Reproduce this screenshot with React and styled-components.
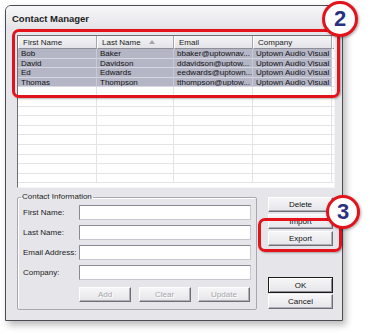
import React from "react";
import styled, { createGlobalStyle } from "styled-components";

const GlobalStyle = createGlobalStyle`
  body {
    margin: 0;
    background: #fff;
    font-family: "Liberation Sans", Arial, sans-serif;
  }
`;

const columns = ["First Name", "Last Name", "Email", "Company"];

const contacts = [
  ["Bob", "Baker", "bbaker@uptownav...", "Uptown Audio Visual"],
  ["David", "Davidson", "ddavidson@uptow...", "Uptown Audio Visual"],
  ["Ed", "Edwards", "eedwards@uptown...", "Uptown Audio Visual"],
  ["Thomas", "Thompson", "tthompson@uptow...", "Uptown Audio Visual"]
];

const EMPTY_ROWS = 10;

const fields = ["First Name:", "Last Name:", "Email Address:", "Company:"];

const Page = styled.div`
  position: relative;
  width: 370px;
  height: 335px;
  padding: 5px 0 0 5px;
  box-sizing: border-box;
  overflow: hidden;
`;

const Window = styled.div`
  width: 338px;
  height: 316px;
  box-sizing: border-box;
  border: 1px solid #4c4c54;
  border-radius: 6px 6px 0 0;
  background: #e6e6ea;
  box-shadow: 3px 4px 7px rgba(0, 0, 0, 0.28);
  display: flex;
  flex-direction: column;
`;

const TitleBar = styled.div`
  height: 24px;
  flex: none;
  display: flex;
  align-items: center;
  padding-left: 6px;
  border-radius: 5px 5px 0 0;
  background: linear-gradient(#f7f7f9, #e3e3e7);
  font-size: 9.5px;
  font-weight: bold;
  color: #222;
`;

const Body = styled.div`
  flex: 1;
  display: flex;
  flex-direction: column;
  padding: 5px 7px 10px 11px;
`;

const ListView = styled.div`
  height: 153px;
  box-sizing: border-box;
  border: 1px solid;
  border-color: #6e6e78 #f4f4f6 #f4f4f6 #6e6e78;
  background: #fff;
  overflow: hidden;
  font-size: 8px;
  color: #111;
`;

const Grid = styled.div`
  display: grid;
  grid-template-columns: 79px 77px 79px 79px 1fr;
`;

const HeaderCell = styled.div`
  height: 13px;
  box-sizing: border-box;
  display: flex;
  align-items: center;
  gap: 8px;
  padding-left: 4px;
  background: linear-gradient(#f4f4f6, #e4e4e8);
  border-left: 1px solid #fff;
  border-right: 1px solid #a6a6ae;
  border-bottom: 1px solid #8e8e96;
  color: #222;
`;

const Cell = styled.div`
  height: 9.6px;
  line-height: 9.6px;
  box-sizing: border-box;
  padding-left: 3px;
  white-space: nowrap;
  overflow: hidden;
  background: ${p => (p.$selected ? "#b4b6c6" : "#fff")};
  border-right: 1px solid ${p => (p.$selected ? "#c8c9d4" : "#e4e4e6")};
  border-bottom: 1px solid ${p => (p.$selected ? "#d6d7e0" : "#e4e4e6")};
`;

const SortArrow = () => (
  <svg width="6" height="4" viewBox="0 0 6 4">
    <path d="M3 0 L6 4 L0 4 Z" fill="#a4a4ac" />
  </svg>
);

const Bottom = styled.div`
  flex: 1;
  display: flex;
  gap: 11px;
  margin-top: 4px;
`;

const GroupBox = styled.fieldset`
  width: 240px;
  box-sizing: border-box;
  margin: 0;
  padding: 3px 5px 6px 5px;
  border: 1px solid #a8a8b0;
  border-radius: 2px;
  box-shadow: inset 1px 1px 0 #fff;
`;

const Legend = styled.legend`
  margin-left: -2px;
  padding: 0 1px;
  font-size: 8px;
  line-height: 10px;
  color: #222;
`;

const Fields = styled.div`
  display: grid;
  grid-template-columns: 56px 172px;
  row-gap: 5px;
  align-items: center;
`;

const Label = styled.label`
  font-size: 8px;
  color: #222;
`;

const Input = styled.div`
  height: 15px;
  box-sizing: border-box;
  background: #fff;
  border: 1px solid;
  border-color: #8a8a94 #c8c8d0 #c8c8d0 #8a8a94;
`;

const ActionRow = styled.div`
  display: flex;
  justify-content: space-between;
  margin: 7px 1px 0 56px;
`;

const Button = styled.button`
  width: ${p => p.$width || 65}px;
  height: ${p => (p.$default ? 16 : 15)}px;
  box-sizing: border-box;
  padding: 0;
  font-family: "Liberation Sans", Arial, sans-serif;
  font-size: 8px;
  color: ${p => (p.disabled ? "#a6a6ac" : "#111")};
  text-shadow: ${p => (p.disabled ? "1px 1px 0 #fff" : "none")};
  background: linear-gradient(#f6f6f8, #e6e6ea);
  border: 1px solid;
  border-color: ${p =>
    p.$default ? "#1c1c1c" : "#ffffff #6e6e76 #6e6e76 #ffffff"};
  box-shadow: ${p =>
    p.$default
      ? "inset 1px 1px 0 #fff, inset -1px -1px 0 #8a8a92"
      : "inset -1px -1px 0 #b0b0b8"};
`;

const ButtonColumn = styled.div`
  display: flex;
  flex-direction: column;
  gap: 2px;
  padding: 5px 0 1px;
`;

const DialogButtons = styled.div`
  margin-top: auto;
  display: flex;
  flex-direction: column;
  gap: 1px;
`;

const Callout = styled.div`
  position: absolute;
  left: ${p => p.$x}px;
  top: ${p => p.$y}px;
  width: ${p => p.$w}px;
  height: ${p => p.$h}px;
  box-sizing: border-box;
  border: 3px solid #e3121b;
  border-radius: 7px;
  box-shadow: 1px 1px 2px rgba(0, 0, 0, 0.3);
`;

const Badge = styled.div`
  position: absolute;
  left: ${p => p.$x}px;
  top: ${p => p.$y}px;
  width: ${p => p.$size}px;
  height: ${p => p.$size}px;
  box-sizing: border-box;
  border: 3px solid #e3121b;
  border-radius: 50%;
  background: #fff;
  box-shadow: 1px 1px 3px rgba(0, 0, 0, 0.35);
  display: flex;
  align-items: center;
  justify-content: center;
  font-size: 22px;
  font-weight: bold;
  color: #2b2f7f;
`;

export default function App() {
  return (
    <Page>
      <GlobalStyle />
      <Window>
        <TitleBar>Contact Manager</TitleBar>
        <Body>
          <ListView>
            <Grid>
              {columns.map(c => (
                <HeaderCell key={c}>
                  {c}
                  {c === "Last Name" && <SortArrow />}
                </HeaderCell>
              ))}
              <HeaderCell />
              {contacts.map((row, r) => (
                <React.Fragment key={r}>
                  {row.map((v, c) => (
                    <Cell key={c} $selected>
                      {v}
                    </Cell>
                  ))}
                  <Cell />
                </React.Fragment>
              ))}
              {Array.from({ length: EMPTY_ROWS }).map((_, r) => (
                <React.Fragment key={"e" + r}>
                  {columns.map(c => (
                    <Cell key={c} />
                  ))}
                  <Cell />
                </React.Fragment>
              ))}
            </Grid>
          </ListView>
          <Bottom>
            <GroupBox>
              <Legend>Contact Information</Legend>
              <Fields>
                {fields.map(f => (
                  <React.Fragment key={f}>
                    <Label>{f}</Label>
                    <Input />
                  </React.Fragment>
                ))}
              </Fields>
              <ActionRow>
                <Button $width={52} disabled>
                  Add
                </Button>
                <Button $width={52} disabled>
                  Clear
                </Button>
                <Button $width={52} disabled>
                  Update
                </Button>
              </ActionRow>
            </GroupBox>
            <ButtonColumn>
              <Button>Delete</Button>
              <Button>Import</Button>
              <Button>Export</Button>
              <DialogButtons>
                <Button $default>OK</Button>
                <Button>Cancel</Button>
              </DialogButtons>
            </ButtonColumn>
          </Bottom>
        </Body>
      </Window>
      <Callout $x={12} $y={29} $w={328} $h={69} />
      <Badge $x={322} $y={1} $size={36}>
        2
      </Badge>
      <Callout $x={258} $y={218} $w={84} $h={34} />
      <Badge $x={326} $y={195} $size={34}>
        3
      </Badge>
    </Page>
  );
}
